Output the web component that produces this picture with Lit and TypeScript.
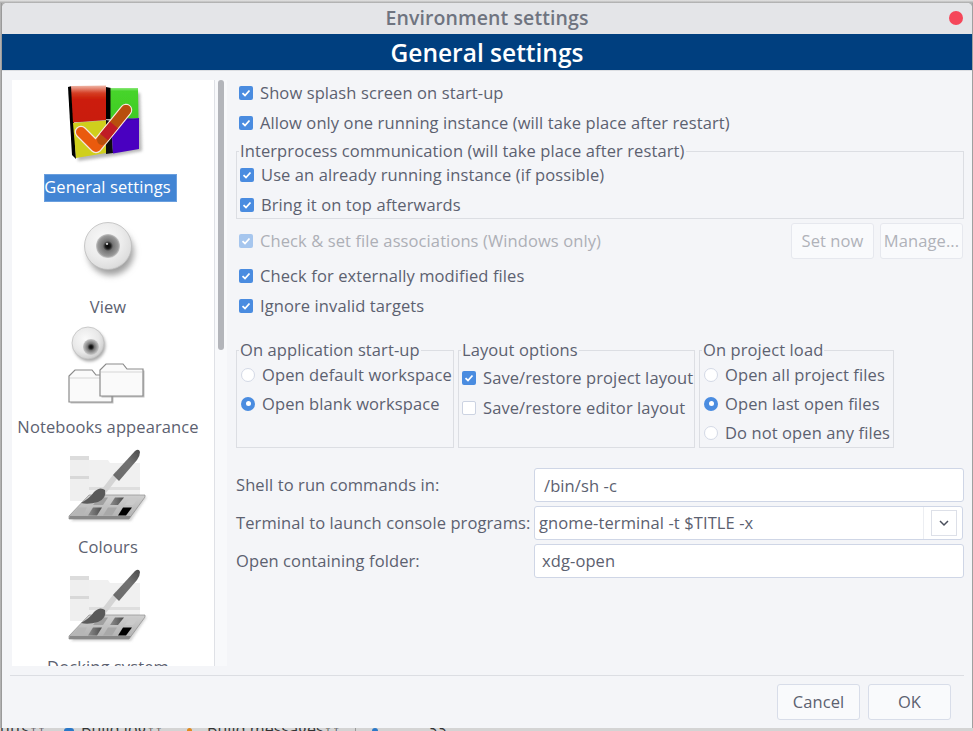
import { LitElement, html, css, svg } from "lit";
import { customElement } from "lit/decorators.js";

const cubeIcon = svg`<svg class="icon" viewBox="0 0 80 80" width="80" height="80">
  <defs>
    <filter id="cs" x="-20%" y="-20%" width="140%" height="140%"><feGaussianBlur stdDeviation="1.500"/></filter>
    <filter id="cl" x="-5%" y="-5%" width="110%" height="110%"><feGaussianBlur stdDeviation=".3"/></filter>
    <linearGradient id="cr" x1="0" y1="0" x2="0" y2="1"><stop offset="0" stop-color="#f0b8a8"/><stop offset=".2" stop-color="#d53f26"/><stop offset=".36" stop-color="#cc1f08"/><stop offset="1" stop-color="#c91c08"/></linearGradient>
    <linearGradient id="cg" x1="0" y1="0" x2="0" y2="1"><stop offset="0" stop-color="#8ae878"/><stop offset=".1" stop-color="#46d42a"/><stop offset="1" stop-color="#40cc24"/></linearGradient>
  </defs>
  <path d="M8 8L72 8L74 66L46 71L10 76Z" fill="#999" opacity=".7" filter="url(#cs)"/>
  <g filter="url(#cl)">
    <path d="M0 2L4 1L6 37L8 74L4 70L2 37Z" fill="#050505"/>
    <path d="M38 2L43 3L43 34L38 34Z" fill="#050505"/>
    <path d="M3 1L38 .5L38 35L5 37.500Z" fill="url(#cr)"/>
    <path d="M42.500 3L70 3L70.500 33L42.500 35Z" fill="url(#cg)"/>
    <path d="M5 38L38 35.500L38 68L8 73Z" fill="#cfcf1e"/>
    <path d="M38 35L43 36L45 68L38 69Z" fill="#111"/>
    <path d="M43 36L71 33L71 64L45 68.500Z" fill="#4a00c0"/>
    <path d="M42 36L55 33L71 34L48 37Z" fill="#3a0a9a"/>
    <path d="M13 47L28 62L58 25" fill="none" stroke="#f4e8de" stroke-width="12.500" stroke-linecap="round" stroke-linejoin="round"/>
    <path d="M13 47L28 62L58 25" fill="none" stroke="#ea5a10" stroke-width="10" stroke-linecap="round" stroke-linejoin="round"/>
    <path d="M34 55L58 25" fill="none" stroke="#b8500f" stroke-width="10" stroke-linecap="round"/>
    <path d="M36 52L46 40" fill="none" stroke="#c01a28" stroke-width="10"/>
  </g>
</svg>`;

const eye = (id: string, cx: number, cy: number, r: number) => svg`
  <defs>
    <radialGradient id="${id}b" cx=".42" cy=".38" r=".7"><stop offset="0" stop-color="#fafafa"/><stop offset=".55" stop-color="#ececec"/><stop offset=".85" stop-color="#dedede"/><stop offset="1" stop-color="#c4c4c4"/></radialGradient>
    <radialGradient id="${id}p"><stop offset="0" stop-color="#050505"/><stop offset=".22" stop-color="#1c1c1c"/><stop offset=".42" stop-color="#747474"/><stop offset=".85" stop-color="#9a9a9a"/><stop offset="1" stop-color="#cacaca"/></radialGradient>
    <filter id="${id}s" x="-40%" y="-40%" width="180%" height="180%"><feGaussianBlur stdDeviation="${r / 7}"/></filter>
  </defs>
  <circle cx="${cx + r * 0.12}" cy="${cy + r * 0.26}" r="${r - 1}" fill="#a0a0a0" filter="url(#${id}s)"/>
  <circle cx="${cx}" cy="${cy}" r="${r - 0.5}" fill="url(#${id}b)" stroke="#bcbcbc" stroke-width=".8"/>
  <circle cx="${cx}" cy="${cy}" r="${r * 0.5}" fill="url(#${id}p)"/>
  <circle cx="${cx - r * 0.04}" cy="${cy - r * 0.09}" r="${r * 0.05}" fill="#cfcfcf"/>
`;

const viewIcon = svg`<svg class="icon" viewBox="0 0 80 80" width="80" height="80">${eye("ve", 40, 41, 24)}</svg>`;

const folder = (x: number, y: number) => svg`
  <path d="M${x + 1} ${y + 33}V${y + 7}L${x + 7} ${y + 1}H${x + 24}L${x + 28} ${y + 6}H${x + 44}V${y + 33}Z" transform="translate(1.500 1.500)" fill="#999" opacity=".6"/>
  <path d="M${x + 1} ${y + 33}V${y + 7}L${x + 7} ${y + 1}H${x + 24}L${x + 28} ${y + 6}H${x + 44}V${y + 33}Z" fill="#fafafa" stroke="#8b8b8b" stroke-width="1.200"/>
  <path d="M${x + 2} ${y + 9}H${x + 43}" stroke="#e2e2e2" stroke-width="1.500"/>
`;

const notebookIcon = svg`<svg class="icon" viewBox="0 0 80 80" width="80" height="80">
  <defs><radialGradient id="nb" cx=".42" cy=".38" r=".7"><stop offset="0" stop-color="#fafafa"/><stop offset=".6" stop-color="#e8e8e8"/><stop offset="1" stop-color="#c4c4c4"/></radialGradient>
  <radialGradient id="np"><stop offset="0" stop-color="#050505"/><stop offset=".22" stop-color="#222"/><stop offset=".45" stop-color="#777"/><stop offset="1" stop-color="#cacaca"/></radialGradient>
  <filter id="ns" x="-30%" y="-30%" width="160%" height="160%"><feGaussianBlur stdDeviation="1.500"/></filter></defs>
  <circle cx="21.500" cy="20.500" r="16" fill="#aaa" filter="url(#ns)"/>
  <circle cx="20" cy="18" r="16" fill="url(#nb)" stroke="#c0c0c0" stroke-width=".8"/>
  <circle cx="23" cy="22" r="8" fill="url(#np)"/>
  ${folder(0, 44)}
  ${folder(31, 38)}
</svg>`;

const paletteIcon = (id: string) => svg`<svg class="icon" viewBox="0 0 80 80" width="80" height="80">
  <defs>
    <linearGradient id="${id}b" x1="0" y1="1" x2="1" y2="0"><stop offset="0" stop-color="#6a6a6a"/><stop offset=".6" stop-color="#717171"/><stop offset="1" stop-color="#4c4c4c"/></linearGradient>
    <linearGradient id="${id}f" x1="0" y1="0" x2="0" y2="1"><stop offset="0" stop-color="#cfcfcf"/><stop offset="1" stop-color="#b0b0b0"/></linearGradient>
    <linearGradient id="${id}w" x1="0" y1="0" x2="1" y2="0"><stop offset="0" stop-color="#8c8c8c"/><stop offset="1" stop-color="#4c4c4c"/></linearGradient>
    <filter id="${id}s" x="-10%" y="-10%" width="120%" height="120%"><feGaussianBlur stdDeviation="1"/></filter>
    <filter id="${id}l" x="-5%" y="-5%" width="110%" height="110%"><feGaussianBlur stdDeviation=".4"/></filter>
  </defs>
  <g filter="url(#${id}l)">
    <rect x="2" y="11" width="19" height="45" fill="#efefef"/>
    <rect x="2" y="11" width="19" height="4" fill="#dcdcdc"/>
    <rect x="2" y="31" width="19" height="3" fill="#d8d8d8"/>
    <path d="M21 15H40L42 18H72V55H21Z" fill="#f0f0f0"/>
    <rect x="21" y="42" width="51" height="3" fill="#dedede"/>
    <path d="M3 76L63 76L79 52L23 52Z" fill="#aaa" opacity=".5" filter="url(#${id}s)"/>
    <path d="M1 74V71L21 50H77V52L61 74Z" fill="url(#${id}f)" stroke="#8e8e8e" stroke-width=".7"/>
    <path d="M1 74H61L63 71H2Z" fill="#888"/>
    <path d="M31 52.500H40L35 60H25Z" fill="#a0a0a0"/>
    <path d="M47 52.500H56L50 60H42Z" fill="url(#${id}w)"/>
    <path d="M62 52.500H71L65 60H57Z" fill="#cacaca"/>
    <path d="M10 62.500H19L15 70.500H5Z" fill="#b6b6b6"/>
    <path d="M25 62.500H34L29 70.500H20Z" fill="url(#${id}w)"/>
    <path d="M40 62.500H49L44 70.500H35Z" fill="#a8a8a8"/>
    <path d="M55 62.500H64L58 70.500H50Z" fill="#050505"/>
    <path d="M36 46L50 28" stroke="#d4d4d4" stroke-width="5.500"/>
    <path d="M45 30L67 6Q71 3 72 7Q72 11 69 15L51 36Z" fill="url(#${id}b)"/>
    <path d="M13 58Q22 53 26 47Q32 41 37 45Q39 53 30 57Q20 60 13 58Z" fill="#5a5a5a"/>
  </g>
</svg>`;

@customElement("app-root")
export class AppRoot extends LitElement {
  static styles = css`
    :host {
      display: flex;
      flex-direction: column;
      width: 973px;
      height: 731px;
      overflow: hidden;
      background: #b2b2b2;
      font-family: "Open Sans", "Noto Sans", sans-serif;
      font-size: 16.5px;
      letter-spacing: 0.1px;
      color: #5c6170;
    }
    .top-strip { height: 3px; flex: none; background: linear-gradient(#e6e6e6, #a8a8a8); }
    .mid { flex: 1; display: flex; min-height: 0; }
    .left-strip { width: 2px; flex: none; background: linear-gradient(90deg, #bdbdbd, #8f8f8f); }
    .right-strip { width: 1px; flex: none; background: #a0a0a0; }
    .bottom-strip {
      height: 3px;
      flex: none;
      background: #d4d4d4;
      overflow: hidden;
      display: flex;
      color: #333;
      font-size: 16px;
      line-height: 3px;
      white-space: nowrap;
    }
    .bottom-strip span { display: block; flex: none; }
    .s1 { width: 64px; }
    .dot { width: 10px; height: 3px; margin-right: 7px; border-radius: 5px 5px 0 0; }
    .dot.blue { background: #2a78c8; }
    .dot.orange { width: 5px; margin-right: 15px; background: #e08a20; }
    .s2 { width: 106px; }
    .s3 { width: 148px; }
    .vline { width: 1px; height: 3px; background: #999; }
    .dot.blue2 { width: 6px; margin: 0 50px 0 16px; background: #2a78c8; }
    .window {
      flex: 1;
      display: flex;
      flex-direction: column;
      min-width: 0;
      background: #f4f5f8;
      border-radius: 5px 5px 0 0;
      overflow: hidden;
    }
    .titlebar {
      height: 31px;
      flex: none;
      box-sizing: border-box;
      padding-bottom: 3px;
      background: #e4e5e8;
      display: flex;
      align-items: center;
      justify-content: center;
      position: relative;
      font-size: 19.500px;
      font-weight: 600;
      letter-spacing: 0.1px;
      color: #6f7480;
    }
    .close {
      position: absolute;
      right: 9px;
      top: 8px;
      width: 14px;
      height: 14px;
      border-radius: 50%;
      background: #f5475a;
    }
    .banner {
      height: 36px;
      flex: none;
      background: #003f7f;
      color: #fff;
      font-size: 24.500px;
      font-weight: 600;
      letter-spacing: 0;
      display: flex;
      align-items: center;
      justify-content: center;
    }
    .banner-line { height: 1px; flex: none; background: #dcdee2; }
    .body {
      flex: 1;
      min-height: 0;
      display: flex;
      gap: 9px;
      padding: 9px 8px 9px 10px;
    }
    .side { width: 215px; flex: none; display: flex; overflow: hidden; }
    .list {
      width: 203px;
      flex: none;
      box-sizing: border-box;
      background: #fff;
      border-right: 1px solid #dfe1e6;
      padding-right: 10px;
      display: grid;
      grid-auto-rows: 120px;
      overflow: hidden;
    }
    .item { display: flex; flex-direction: column; align-items: center; color: #5c6170; }
    .icon { display: block; margin-top: 5px; flex: none; }
    .label { height: 28px; margin-top: 9px; line-height: 26px; white-space: nowrap; flex: none; }
    .label.sel { background: #4285d4; color: #fff; padding-right: 6px; margin-left: 5px; outline: 1px solid #6a9fde; outline-offset: -1px; }
    .track { flex: 1; background: #f8f9fb; padding: 0 3px; }
    .thumb { height: 270px; border-radius: 3px; background: #b3b5ba; }
    .main { flex: 1; min-width: 0; display: flex; flex-direction: column; }
    .row { display: flex; align-items: center; gap: 7px; height: 30px; white-space: nowrap; padding-left: 3px; flex: none; }
    .box + span { margin-bottom: 2px; }
    .first { margin-top: -2px; }
    .box {
      width: 14px; height: 14px; flex: none; box-sizing: border-box;
      border-radius: 2px; background: #4a8ce0;
      display: flex; align-items: center; justify-content: center;
    }
    .box.off { background: #fff; border: 1px solid #ccd3e2; }
    .box.dis { background: #a6c6ee; }
    .box svg { display: block; }
    .radio {
      width: 14px; height: 14px; flex: none; box-sizing: border-box; border-radius: 50%;
      background: #fff; border: 1px solid #d4d9e6;
      display: flex; align-items: center; justify-content: center;
    }
    .radio.on { background: #4a8ce0; border: 0; }
    .radio.on::after { content: ""; width: 5px; height: 5px; border-radius: 50%; background: #fff; }
    fieldset {
      margin: 0; padding: 0; min-width: 0;
      border: 1px solid #dcdee3;
      box-sizing: border-box;
    }
    legend {
      padding: 0 1px;
      margin-left: 2px;
      height: 21px;
      line-height: 20px;
      white-space: nowrap;
    }
    .ipc { margin-top: 3px; height: 78px; flex: none; }
    .ipc .row { height: 26px; padding-left: 3px; gap: 7px; }
    .ipc .row + .row { margin-top: 4px; }
    .ipc .inner { margin-top: 0; }
    .assoc { height: 36px; margin-top: 4px; gap: 6px; }
    .assoc .dis-text { color: #adafb6; flex: 1; margin-left: 1px; }
    .btn {
      box-sizing: border-box;
      width: 83px; height: 36px; flex: none;
      padding-bottom: 2px;
      display: flex; align-items: center; justify-content: center;
      background: #f9fafc;
      border: 1px solid #d8dde9;
      border-radius: 3px;
      color: #5c6170;
    }
    .btn.dis { border-color: #e6e8ee; color: #b0b2b9; }
    .assoc .btn:last-child { margin-right: 1px; }
    .after { margin-top: 2px; }
    .groups { display: flex; gap: 4px; margin-top: 19px; height: 108px; flex: none; }
    .g1 { width: 218px; }
    .g2 { width: 237px; }
    .g3 { width: 195px; }
    .groups .row { height: 29px; padding-left: 4px; gap: 7px; }
    .g1 .inner, .g3 .inner { margin-top: -1px; }
    .g2 .row, .groups .g2 .row { padding-left: 3px; gap: 7px; height: 30px; }
    .g2 .inner { margin-top: 2px; }
    .form {
      display: grid;
      grid-template-columns: 298px 1fr;
      margin-top: 20px;
      align-items: center;
      flex: none;
    }
    .form > div { white-space: nowrap; }
    .form > .lbl { padding-bottom: 2px; }
    .field {
      box-sizing: border-box;
      height: 34px;
      background: #fff;
      border: 1px solid #cfd6e6;
      border-radius: 3px;
      display: flex;
      align-items: center;
      padding-left: 9px;
    }
    .field.combo { padding-left: 4px; margin: 4px 1px 4px 0; height: 34px; }
    .combo .txt { flex: 1; padding-bottom: 2px; }
    .combo .sep { align-self: stretch; width: 1px; background: #eceef2; }
    .combo .drop {
      width: 26px; height: 26px; box-sizing: border-box; margin: 0 5px 0 7px;
      border: 1px solid #dde0e8; display: flex; align-items: center; justify-content: center;
    }
    .field.x { padding-left: 7px; padding-bottom: 2px; }
    .footer {
      flex: none;
      height: 53px;
      box-sizing: border-box;
      margin: 0 8px;
      border-top: 1px solid #dcdee3;
      padding: 8px 13px 0 0;
      display: flex;
      justify-content: flex-end;
      gap: 8px;
    }
  `;

  private check(kind: string = "") {
    return html`<span class="box ${kind}">${kind === "off"
      ? ""
      : html`<svg width="10" height="10" viewBox="0 0 10 10"><path d="M1.500 5.200L4 7.500L8.500 2.500" fill="none" stroke="#fff" stroke-width="1.800"/></svg>`}</span>`;
  }

  private radioRow(text: string, on = false) {
    return html`<div class="row"><span class="radio ${on ? "on" : ""}"></span><span>${text}</span></div>`;
  }

  render() {
    return html`
      <div class="top-strip"></div>
      <div class="mid">
        <div class="left-strip"></div>
        <div class="window">
          <div class="titlebar">Environment settings<span class="close"></span></div>
          <div class="banner">General settings</div>
          <div class="banner-line"></div>
          <div class="body">
            <div class="side">
              <div class="list">
                <div class="item">${cubeIcon}<div class="label sel">General settings</div></div>
                <div class="item">${viewIcon}<div class="label">View</div></div>
                <div class="item">${notebookIcon}<div class="label">Notebooks appearance</div></div>
                <div class="item">${paletteIcon("pa")}<div class="label">Colours</div></div>
                <div class="item">${paletteIcon("pb")}<div class="label">Docking system</div></div>
              </div>
              <div class="track"><div class="thumb"></div></div>
            </div>
            <div class="main">
              <div class="row first">${this.check()}<span>Show splash screen on start-up</span></div>
              <div class="row">${this.check()}<span>Allow only one running instance (will take place after restart)</span></div>
              <fieldset class="ipc">
                <legend>Interprocess communication (will take place after restart)</legend>
                <div class="inner">
                  <div class="row">${this.check()}<span>Use an already running instance (if possible)</span></div>
                  <div class="row">${this.check()}<span>Bring it on top afterwards</span></div>
                </div>
              </fieldset>
              <div class="row assoc">
                ${this.check("dis")}<span class="dis-text">Check &amp; set file associations (Windows only)</span>
                <div class="btn dis">Set now</div>
                <div class="btn dis">Manage...</div>
              </div>
              <div class="row after">${this.check()}<span>Check for externally modified files</span></div>
              <div class="row">${this.check()}<span>Ignore invalid targets</span></div>
              <div class="groups">
                <fieldset class="g1">
                  <legend>On application start-up</legend>
                  <div class="inner">
                    ${this.radioRow("Open default workspace")}
                    ${this.radioRow("Open blank workspace", true)}
                  </div>
                </fieldset>
                <fieldset class="g2">
                  <legend>Layout options</legend>
                  <div class="inner">
                    <div class="row">${this.check()}<span>Save/restore project layout</span></div>
                    <div class="row">${this.check("off")}<span>Save/restore editor layout</span></div>
                  </div>
                </fieldset>
                <fieldset class="g3">
                  <legend>On project load</legend>
                  <div class="inner">
                    ${this.radioRow("Open all project files")}
                    ${this.radioRow("Open last open files", true)}
                    ${this.radioRow("Do not open any files")}
                  </div>
                </fieldset>
              </div>
              <div class="form">
                <div class="lbl">Shell to run commands in:</div>
                <div class="field">/bin/sh -c</div>
                <div class="lbl">Terminal to launch console programs:</div>
                <div class="field combo">
                  <span class="txt">gnome-terminal -t $TITLE -x</span>
                  <span class="sep"></span>
                  <span class="drop"><svg width="12" height="8" viewBox="0 0 12 8"><path d="M2 2L6 6L10 2" fill="none" stroke="#4a4f5c" stroke-width="1.500"/></svg></span>
                </div>
                <div class="lbl">Open containing folder:</div>
                <div class="field x">xdg-open</div>
              </div>
            </div>
          </div>
          <div class="footer">
            <div class="btn">Cancel</div>
            <div class="btn">OK</div>
          </div>
        </div>
        <div class="right-strip"></div>
      </div>
      <div class="bottom-strip">
        <span class="s1">utts↑↑</span>
        <span class="dot blue"></span>
        <span class="s2">Build log↑↑</span>
        <span class="dot orange"></span>
        <span class="s3">Build messages↑↑</span>
        <span class="vline"></span>
        <span class="dot blue2"></span>
        <span>33</span>
      </div>
    `;
  }
}
